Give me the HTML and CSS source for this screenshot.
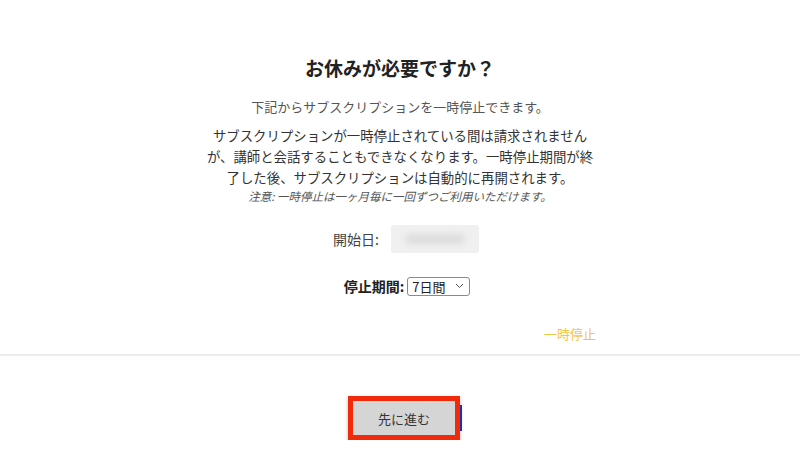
FILE: index.html
```html
<!DOCTYPE html>
<html lang="ja">
<head>
    <meta charset="UTF-8">
    <meta name="viewport" content="width=device-width, initial-scale=1.0">
    <title>一時停止</title>
    <link rel="stylesheet" href="styles.css">
</head>
<body>
    <div class="pause-panel">
        <h1 class="title">お休みが必要ですか？</h1>
        <p class="lead">下記からサブスクリプションを一時停止できます。</p>
        <p class="desc">サブスクリプションが一時停止されている間は請求されません<br>が、講師と会話することもできなくなります。一時停止期間が終<br>了した後、サブスクリプションは自動的に再開されます。</p>
        <p class="note">注意: 一時停止は一ヶ月毎に一回ずつご利用いただけます。</p>

        <div class="field start-row">
            <span class="field-label">開始日:</span>
            <span class="date-box"><span class="date-blur"></span></span>
        </div>

        <div class="field period-row">
            <label for="period" class="field-label strong">停止期間:</label>
            <span class="select-box">
                <span class="select-text">7日間</span>
                <svg class="chevron" width="9" height="6" viewBox="0 0 9 6"><path d="M1 1l3.5 3.5L8 1" fill="none" stroke="#555" stroke-width="1"/></svg>
            </span>
        </div>

        <div class="pause-link-row">
            <a href="#" class="pause-link">一時停止</a>
        </div>
    </div>

    <div class="divider"></div>

    <div class="footer">
        <div class="btn-mark">
            <button type="button" class="next-btn">先に進む</button>
        </div>
    </div>
</body>
</html>
```

FILE: styles.css
```css
body {
    margin: 0;
    font-family: "Noto Sans CJK JP", "Liberation Sans", sans-serif;
    background-color: #fff;
    color: #333;
}

.pause-panel {
    width: 400px;
    margin: 0 auto;
    padding-top: 54px;
    text-align: center;
}

.title {
    margin: 0;
    font-size: 19px;
    line-height: 28px;
    font-weight: bold;
    color: #222;
}

.lead {
    margin: 15px 0 0;
    font-size: 13px;
    line-height: 20px;
    color: #555;
}

.desc {
    margin: 8px 0 0;
    font-size: 13.4px;
    line-height: 21px;
    color: #333;
}

.note {
    margin: 0;
    font-size: 11.5px;
    line-height: 16px;
    font-style: italic;
    color: #555;
}

.field {
    display: flex;
    justify-content: center;
    align-items: center;
}

.start-row {
    margin-top: 21px;
    margin-left: 12px;
    gap: 12px;
}

.field-label {
    font-size: 14px;
    color: #444;
}

.field-label.strong {
    font-weight: bold;
    color: #222;
}

.date-box {
    display: flex;
    align-items: center;
    justify-content: center;
    width: 88px;
    height: 28px;
    background-color: #f0f0f0;
    border-radius: 3px;
}

.date-blur {
    width: 60px;
    height: 10px;
    border-radius: 5px;
    background-color: #dcdcdc;
    filter: blur(3px);
}

.period-row {
    margin-top: 23px;
    margin-left: 14px;
    gap: 3px;
}

.select-box {
    display: flex;
    align-items: center;
    justify-content: space-between;
    width: 52px;
    height: 17px;
    padding: 0 5px 0 4px;
    border: 1px solid #8a8a8a;
    border-radius: 3px;
    background-color: #fff;
}

.select-text {
    font-size: 13px;
    color: #222;
}

.pause-link-row {
    margin-top: 25px;
    line-height: 22px;
    text-align: right;
}

.pause-link {
    margin-right: 4px;
    font-size: 13px;
    color: #f6c444;
    text-decoration: none;
}

.divider {
    margin-top: 9px;
    height: 2px;
    background-color: #ececec;
}

.footer {
    display: flex;
    justify-content: center;
    padding-top: 40px;
    padding-left: 8px;
}

.btn-mark {
    position: relative;
    border: 5px solid #f22a0c;
    box-shadow: 0 2px 4px rgba(0, 0, 0, 0.25);
}

.btn-mark::after {
    content: "";
    position: absolute;
    top: 4px;
    bottom: 4px;
    right: -7px;
    width: 2px;
    background-color: #1e2fb5;
}

.next-btn {
    display: block;
    width: 102px;
    height: 34px;
    border: none;
    background-color: #d5d5d5;
    font-family: inherit;
    font-size: 13px;
    color: #333;
    cursor: pointer;
}
```
